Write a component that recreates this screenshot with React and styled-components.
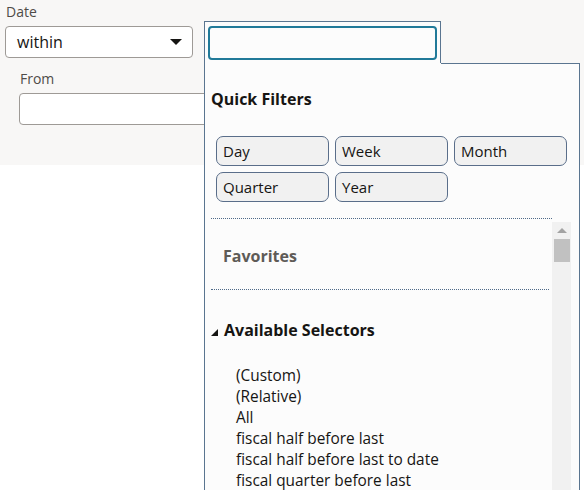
import styled, { createGlobalStyle } from "styled-components";

const Global = createGlobalStyle`
  body { margin: 0; font-family: "Open Sans", "Noto Sans", sans-serif; background: #fff; color: #161513; }
`;

const Page = styled.div`
  position: relative;
  width: 584px;
  height: 490px;
  overflow: hidden;
`;

const Form = styled.div`
  background: #f8f7f6;
  height: 165px;
  padding: 3px 0 0 5px;
  box-sizing: border-box;
`;

const Label = styled.div`
  font-size: 14px;
  color: #4f4c48;
  margin-left: ${({ $indent }) => $indent || 1}px;
  line-height: 18px;
`;

const Select = styled.div`
  width: 188px;
  height: 32px;
  margin-top: 5px;
  box-sizing: border-box;
  border: 1px solid #9e9a96;
  border-radius: 4px;
  background: #fff;
  display: flex;
  align-items: center;
  justify-content: space-between;
  padding: 0 10px 0 11px;
  font-size: 16px;
`;

const Caret = styled.span`
  width: 0;
  height: 0;
  border-left: 6px solid transparent;
  border-right: 6px solid transparent;
  border-top: 6px solid #161513;
`;

const FromBlock = styled.div`
  margin: 12px 0 0 14px;
`;

const Input = styled.div`
  width: 200px;
  height: 32px;
  margin-top: 5px;
  box-sizing: border-box;
  border: 1px solid #9e9a96;
  border-radius: 4px;
  background: #fff;
`;

const Popup = styled.div`
  position: absolute;
  left: 204px;
  top: 21px;
  width: 376px;
`;

const PopHead = styled.div`
  width: 237px;
  height: 42px;
  box-sizing: border-box;
  border: 1px solid #5a7590;
  border-bottom: none;
  background: #fcfcfc;
  padding: 4px 0 0 3px;
`;

const SearchBox = styled.div`
  width: 229px;
  height: 34px;
  box-sizing: border-box;
  border: 2px solid #217a99;
  border-radius: 4px;
  background: #fcfcfc;
`;

const PopBody = styled.div`
  position: relative;
  height: 430px;
  box-sizing: border-box;
  border: 1px solid #5a7590;
  border-top: none;
  background: #fcfcfc;
  padding: 0 0 0 6px;
  &::before {
    content: "";
    position: absolute;
    left: 236px;
    right: -1px;
    top: 0;
    border-top: 1px solid #5a7590;
  }
`;

const Heading = styled.div`
  font-size: 16px;
  font-weight: 700;
  color: ${({ $muted }) => ($muted ? "#5e5b57" : "#161513")};
  line-height: 22px;
  padding-top: ${({ $top }) => $top || 0}px;
`;

const Chips = styled.div`
  display: grid;
  grid-template-columns: repeat(3, 113px);
  gap: 6px 6px;
  margin: 26px 0 16px 5px;
`;

const Chip = styled.div`
  height: 30px;
  box-sizing: border-box;
  border: 1px solid #5a6e8a;
  border-radius: 7px;
  background: #f1f1f1;
  font-size: 15px;
  padding-left: 6px;
  line-height: 28px;
`;

const Dotted = styled.div`
  width: ${({ $w }) => $w}px;
  border-top: 1px dotted #4f6a88;
`;

const Scroller = styled.div`
  display: flex;
  margin-top: 3px;
`;

const ScrollContent = styled.div`
  width: 341px;
`;

const Track = styled.div`
  width: 19px;
  height: 270px;
  background: #f1f1f1;
  padding-top: 6px;
  box-sizing: border-box;
`;

const UpArrow = styled.div`
  width: 0;
  height: 0;
  margin: 0 auto;
  border-left: 5px solid transparent;
  border-right: 5px solid transparent;
  border-bottom: 5px solid #a3a3a3;
`;

const Thumb = styled.div`
  margin: 6px 1px 0 2px;
  height: 23px;
  background: #c1c1c1;
`;

const Section = styled.div`
  padding: ${({ $pad }) => $pad};
`;

const Tri = styled.span`
  display: inline-block;
  width: 0;
  height: 0;
  border-left: 7px solid transparent;
  border-bottom: 7px solid #161513;
  margin-right: 6px;
`;

const List = styled.div`
  padding: 24px 0 0 25px;
  font-size: 15.4px;
  line-height: 21px;
`;

const items = [
  "(Custom)",
  "(Relative)",
  "All",
  "fiscal half before last",
  "fiscal half before last to date",
  "fiscal quarter before last",
];

export default function App() {
  return (
    <Page>
      <Global />
      <Form>
        <Label>Date</Label>
        <Select>
          within
          <Caret />
        </Select>
        <FromBlock>
          <Label>From</Label>
          <Input />
        </FromBlock>
      </Form>
      <Popup>
        <PopHead>
          <SearchBox />
        </PopHead>
        <PopBody>
          <Heading $top={25}>Quick Filters</Heading>
          <Chips>
            {["Day", "Week", "Month", "Quarter", "Year"].map((c) => (
              <Chip key={c}>{c}</Chip>
            ))}
          </Chips>
          <Dotted $w={341} />
          <Scroller>
            <ScrollContent>
              <Section $pad="23px 0 22px 12px">
                <Heading $muted>Favorites</Heading>
              </Section>
              <Dotted $w={338} />
              <Section $pad="29px 0 0 0">
                <Heading>
                  <Tri />
                  Available Selectors
                </Heading>
                <List>
                  {items.map((i) => (
                    <div key={i}>{i}</div>
                  ))}
                </List>
              </Section>
            </ScrollContent>
            <Track>
              <UpArrow />
              <Thumb />
            </Track>
          </Scroller>
        </PopBody>
      </Popup>
    </Page>
  );
}
